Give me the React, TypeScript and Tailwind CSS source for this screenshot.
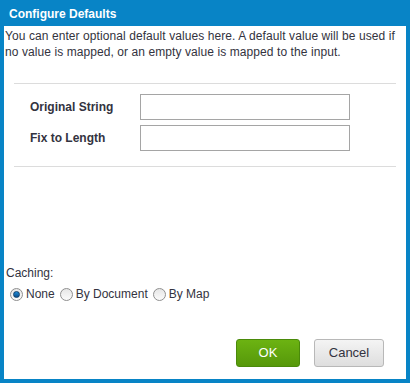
import React, { useState } from "react";

const Radio = ({ checked, label, onClick }: { checked: boolean; label: string; onClick: () => void }) => (
    <label className="flex items-center gap-[3px] cursor-pointer" onClick={onClick}>
        <span className="w-[13px] h-[13px] rounded-full border border-[#8f8f8f] bg-gradient-to-b from-[#e6e6e6] to-[#fbfbfb] flex items-center justify-center">
            {checked && <span className="w-[7px] h-[7px] rounded-full bg-gradient-to-b from-[#1f8ad6] to-[#0a4f8c] border border-[#0b3d6b]" />}
        </span>
        <span>{label}</span>
    </label>
);

export default function App() {
    const [caching, setCaching] = useState("none");

    return (
        <div className="w-[410px] h-[383px] bg-[#0884c6] px-[4px] pb-[4px] flex flex-col text-[12px] text-[#333340]"
             style={{ fontFamily: '"Liberation Sans", Arial, sans-serif' }}>

            {/* title bar */}
            <div className="h-[26px] flex items-center pl-[5px] text-white font-bold text-[12px] pt-[1px]">
                Configure Defaults
            </div>

            <div className="flex-1 bg-white flex flex-col">
                <p className="leading-[16px] pt-[2px] pl-[1px] pr-[2px] tracking-[0.08px]">
                    You can enter optional default values here. A default value will be used if no value is mapped, or an empty value is mapped to the input.
                </p>

                <div className="mx-[10px] mt-[23px] border-t border-[#dcdcdc]" />

                <div className="flex flex-col gap-[5px] mt-[10px] pl-[26px]">
                    <div className="flex items-center">
                        <span className="w-[110px] font-bold">Original String</span>
                        <input className="w-[210px] h-[26px] border border-[#a5a5a5] outline-none px-1" />
                    </div>
                    <div className="flex items-center">
                        <span className="w-[110px] font-bold">Fix to Length</span>
                        <input className="w-[210px] h-[26px] border border-[#a5a5a5] outline-none px-1" />
                    </div>
                </div>

                <div className="mx-[10px] mt-[15px] border-t border-[#dcdcdc]" />

                <div className="mt-[98px] pl-[2px] leading-[16px]">Caching:</div>
                <div className="flex items-center gap-[5px] pl-[6px] mt-[5px] leading-[16px]">
                    <Radio checked={caching === "none"} label="None" onClick={() => setCaching("none")} />
                    <Radio checked={caching === "doc"} label="By Document" onClick={() => setCaching("doc")} />
                    <Radio checked={caching === "map"} label="By Map" onClick={() => setCaching("map")} />
                </div>

                <div className="mt-auto mb-[12px] flex justify-end gap-[14px] pr-[22px]">
                    <button className="w-[64px] h-[28px] rounded-[3px] border border-[#4a8a0a] bg-gradient-to-b from-[#6cb312] to-[#56980a] text-white text-[13px]">
                        OK
                    </button>
                    <button className="w-[70px] h-[28px] rounded-[3px] border border-[#b8b8b8] bg-gradient-to-b from-[#f4f4f4] to-[#dedede] text-[#333340] text-[13px]">
                        Cancel
                    </button>
                </div>
            </div>
        </div>
    );
}
